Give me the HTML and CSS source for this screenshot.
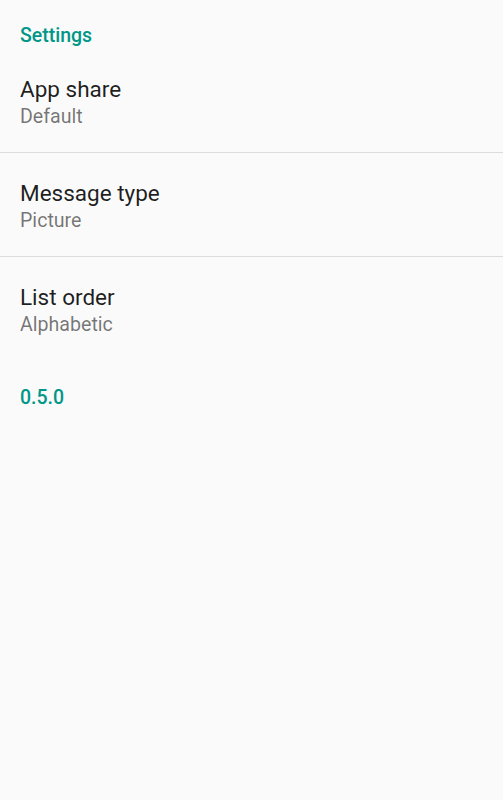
FILE: index.html
```html
<!DOCTYPE html>
<html lang="en">
    <head>
        <meta charset="UTF-8">
        <title>Settings</title>
        <link rel="stylesheet" href="styles.css">
    </head>
    <body>
        <div class="settings">
            <h2 class="category">Settings</h2>
            <ul class="prefs">
                <li class="pref">
                    <div class="pref-title">App share</div>
                    <div class="pref-summary">Default</div>
                </li>
                <li class="pref">
                    <div class="pref-title">Message type</div>
                    <div class="pref-summary">Picture</div>
                </li>
                <li class="pref">
                    <div class="pref-title">List order</div>
                    <div class="pref-summary">Alphabetic</div>
                </li>
            </ul>
            <div class="version">0.5.0</div>
        </div>
    </body>
</html>
```

FILE: styles.css
```css
body {
    font-family: Roboto, 'Liberation Sans', sans-serif;
    margin: 0;
    padding: 0;
    background-color: #fafafa;
    height: 100vh;
}
.settings {
    padding: 0 20px;
}
.category {
    margin: 0;
    padding: 24px 0 1px;
    font-size: 19.5px;
    font-weight: 500;
    line-height: 24px;
    color: #009688;
}
.prefs {
    list-style: none;
    margin: 0 -20px;
    padding: 0;
}
.pref {
    padding: 26px 20px 23px;
    border-bottom: 1px solid #dcdcdc;
}
.pref:last-child {
    border-bottom: none;
}
.pref-title {
    font-size: 22.5px;
    line-height: 29px;
    color: #000000e0;
}
.pref-summary {
    font-size: 19.6px;
    line-height: 25px;
    color: #0000008a;
}
.version {
    padding-top: 26px;
    font-size: 19.5px;
    font-weight: 500;
    line-height: 24px;
    color: #009688;
}
```
